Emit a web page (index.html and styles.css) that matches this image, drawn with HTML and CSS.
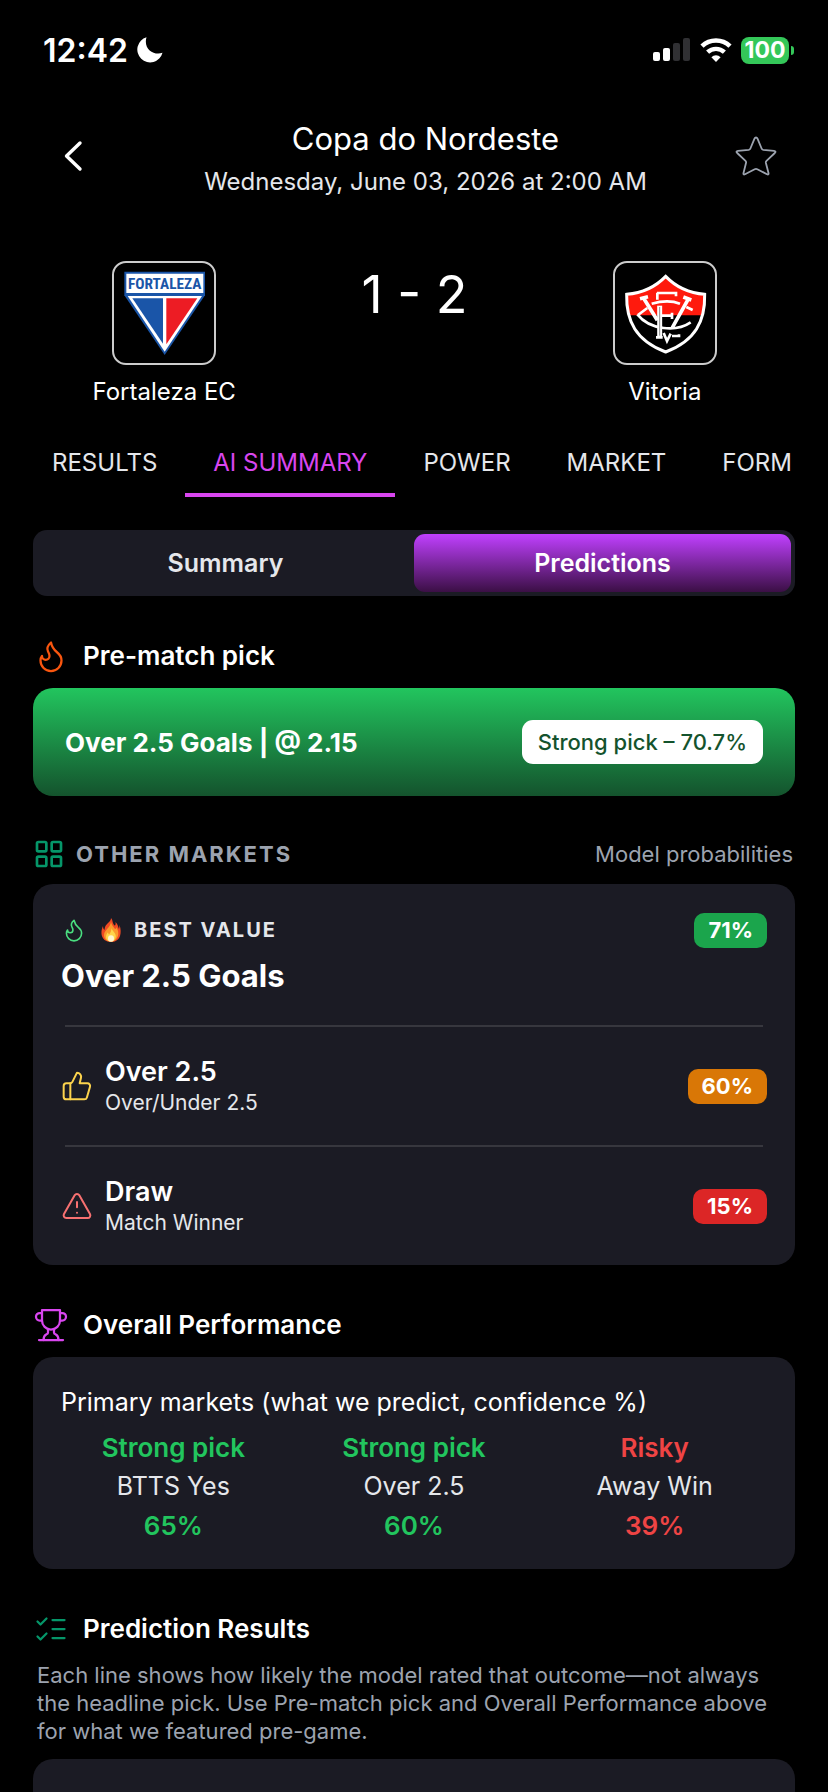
FILE: index.html
```
<!DOCTYPE html>
<html lang="en">
	<head>
		<meta charset="UTF-8">
		<meta name="viewport" content="width=device-width, initial-scale=1">
		<title>Fortaleza EC - Vitoria</title>
		<link rel="stylesheet" href="styles.css">
	</head>
	<body>
		<div class="status">
			<div class="status-left">
				<span class="clock">12:42</span>
				<svg class="moon" viewBox="0 0 26 26"><path d="M9.500 .3A12.800 12.800 0 1 0 25.500 15.800C17 19 6 12 9.500 .3Z" fill="#fff"/></svg>
			</div>
			<div class="status-right">
				<svg class="signal" viewBox="0 0 38 24">
					<rect x="0" y="14" width="7" height="9" rx="2" fill="#fff"/>
					<rect x="10" y="10" width="7" height="13" rx="2" fill="#fff"/>
					<rect x="20" y="5" width="7" height="18" rx="2" fill="#303033"/>
					<rect x="30" y="0" width="7" height="23" rx="2" fill="#303033"/>
				</svg>
				<svg class="wifi" viewBox="0 0 32 24">
					<path d="M2 8.200a20.200 20.200 0 0 1 28 0" fill="none" stroke="#fff" stroke-width="4.600"/>
					<path d="M7.600 14.200a12.200 12.200 0 0 1 16.800 0" fill="none" stroke="#fff" stroke-width="4.400"/>
					<path d="M16 24l-4.600-4.800a6.600 6.600 0 0 1 9.200 0Z" fill="#fff"/>
				</svg>
				<div class="battery">
					<span class="battery-level">100</span>
					<span class="battery-tip"></span>
				</div>
			</div>
		</div>

		<header class="header">
			<button class="icon-btn" type="button" aria-label="Back">
				<svg class="back" viewBox="0 0 36 36"><path d="M26 5L12.500 18L26 31" fill="none" stroke="#fff" stroke-width="3.400" stroke-linecap="round" stroke-linejoin="round"/></svg>
			</button>
			<div class="header-text">
				<h1 class="league">Copa do Nordeste</h1>
				<p class="date">Wednesday, June 03, 2026 at 2:00 AM</p>
			</div>
			<button class="icon-btn" type="button" aria-label="Favourite">
				<svg class="star" viewBox="0 0 42 42"><path d="M21 2.500Q22 2.500 22.500 3.700L26.600 13.500Q27 14.700 28.300 14.900L39 15.900Q41.500 16.200 39.800 18L31.500 25.800Q30.600 26.700 30.900 28L33.500 38Q33.900 40.200 32 39.200L22.300 34.200Q21 33.500 19.700 34.200L10 39.200Q8.100 40.200 8.500 38L11 28Q11.400 26.700 10.500 25.800L2.200 18Q.5 16.200 3 15.900L13.700 14.900Q15 14.700 15.400 13.500L19.500 3.700Q20 2.500 21 2.500Z" fill="none" stroke="#9ca3af" stroke-width="1.800" stroke-linejoin="round"/></svg>
			</button>
		</header>

		<div class="match">
			<div class="team">
				<div class="badge-box">
					<svg viewBox="162 68 300 300">
						<path d="M193 94H435V165L314 344L193 165Z" fill="#1a55a8"/>
						<path d="M199 100H430V158H199Z" fill="#fff"/>
						<path d="M203 167H426L314 334Z" fill="#fff"/>
						<path d="M217 174H309V310Z" fill="#1a55a8"/>
						<path d="M319 174H412L319 312Z" fill="#ed1c24"/>
						<text class="crest-text" x="314" y="146" text-anchor="middle">FORTALEZA</text>
					</svg>
				</div>
				<p class="team-name">Fortaleza EC</p>
			</div>
			<p class="score">1 - 2</p>
			<div class="team">
				<div class="badge-box">
					<svg viewBox="585 68 300 300">
						<path d="M737 108C708 138 668 158 620 162C618 242 648 302 737 335C826 302 856 242 854 162C806 158 766 138 737 108Z" fill="#000"/>
						<path d="M737 108C708 138 668 158 620 162C620 186 623 206 630 225H844C851 206 854 186 854 162C806 158 766 138 737 108Z" fill="#ff1a0d"/>
						<path d="M737 108C708 138 668 158 620 162C618 242 648 302 737 335C826 302 856 242 854 162C806 158 766 138 737 108Z" fill="none" stroke="#fff" stroke-width="9"/>
						<g fill="none" stroke="#fff" stroke-width="8">
							<path d="M695 190C730 180 760 182 780 190M652 222C690 270 770 275 812 246M654 224L682 203M799 200L818 209"/>
							<path d="M660 175L684 169M670 172L712 240M806 174L757 262M790 170L814 179" stroke-width="11"/>
							<path d="M711 158H768V168M712 157V178M708 291H728M725 226H757M756 217V236"/>
							<path d="M719 196V290" stroke-width="15"/>
							<path d="M731 278L741 302L752 280M756 287H777V282"/>
						</g>
						<path d="M719 200V286" fill="none" stroke="#555" stroke-width="2"/>
					</svg>
				</div>
				<p class="team-name">Vitoria</p>
			</div>
		</div>

		<nav class="tabs">
			<a class="tab" href="#results">RESULTS</a>
			<a class="tab active" href="#summary">AI SUMMARY</a>
			<a class="tab" href="#power">POWER</a>
			<a class="tab" href="#market">MARKET</a>
			<a class="tab" href="#form">FORM</a>
		</nav>

		<main class="content">
			<div class="switch">
				<button class="switch-btn" type="button">Summary</button>
				<button class="switch-btn on" type="button">Predictions</button>
			</div>

			<div class="section-head">
				<svg class="icon orange" viewBox="0 0 24 24"><path d="M8.500 14.500A2.500 2.500 0 0 0 11 12c0-1.380-.5-2-1-3-1.072-2.143-.224-4.054 2-6 .5 2.500 2 4.900 4 6.500 2 1.600 3 3.500 3 5.500a7 7 0 1 1-14 0c0-1.153.433-2.294 1-3a2.500 2.500 0 0 0 2.500 2.500z"/></svg>
				<h2>Pre-match pick</h2>
			</div>
			<div class="pick">
				<span class="pick-name">Over 2.5 Goals | @ 2.15</span>
				<span class="pick-tag">Strong pick – 70.7%</span>
			</div>

			<div class="section-head markets-head">
				<svg class="icon icon-m emerald bold" viewBox="0 0 24 24"><rect x="3" y="3" width="7" height="7" rx="1"/><rect x="14" y="3" width="7" height="7" rx="1"/><rect x="14" y="14" width="7" height="7" rx="1"/><rect x="3" y="14" width="7" height="7" rx="1"/></svg>
				<h2 class="caps">OTHER MARKETS</h2>
				<span class="note">Model probabilities</span>
			</div>
			<div class="card markets">
				<div class="best">
					<div class="best-row">
						<svg class="icon icon-s green" viewBox="0 0 24 24"><path d="M8.500 14.500A2.500 2.500 0 0 0 11 12c0-1.380-.5-2-1-3-1.072-2.143-.224-4.054 2-6 .5 2.500 2 4.900 4 6.500 2 1.600 3 3.500 3 5.500a7 7 0 1 1-14 0c0-1.153.433-2.294 1-3a2.500 2.500 0 0 0 2.500 2.500z"/></svg>
						<svg class="fire" viewBox="0 0 20 24">
							<path d="M10 0C12 2 11 4 13 7C14 8 15 7 14.500 4C17 6 17 9 18 11C18.500 9 18.500 8 18.500 7C20 11 20 15 19 18C17.500 22 14 24 10 24C5 24 1 21 .5 16C.2 13 1 10 2 8C2 10 2.500 11 3.500 12C4 8 5 7 7 5C9 3 10 2 10 0Z" fill="#f04a23"/>
							<path d="M10 4C11 8 13 9 14 11C15 11 15.500 10 15.500 9C18 14 17.500 17 16.500 19C15 22 12.500 23.500 10 23.500C6 23.500 3 21 3 17C3 14 5 12.500 6.500 10.500C8 9 9.500 7 10 4Z" fill="#fb9a2c"/>
							<path d="M10.500 10C11 13 15 15 14.800 18.500C14.500 21.500 12.500 23.500 10 23.500C7 23.500 5 21.500 5 19C5 17 6 16 6.500 14.500C7.500 15 7.500 16 8 16.500C9.500 15 10.500 12.500 10.500 10Z" fill="#ffd54a"/>
							<ellipse cx="10" cy="20.500" rx="3" ry="3.200" fill="#fff6cf"/>
						</svg>
						<span class="best-label">BEST VALUE</span>
						<span class="pct pct-green">71%</span>
					</div>
					<h3 class="best-name">Over 2.5 Goals</h3>
				</div>
				<hr class="line">
				<div class="market">
					<svg class="icon icon-m yellow" viewBox="0 0 24 24"><path d="M7 10v12"/><path d="M15 5.880 14 10h5.830a2 2 0 0 1 1.920 2.560l-2.330 8A2 2 0 0 1 17.500 22H4a2 2 0 0 1-2-2v-8a2 2 0 0 1 2-2h2.760a2 2 0 0 0 1.790-1.110L12 2a3.130 3.130 0 0 1 3 3.880Z"/></svg>
					<div class="market-text">
						<h3>Over 2.5</h3>
						<p>Over/Under 2.5</p>
					</div>
					<span class="pct pct-amber">60%</span>
				</div>
				<hr class="line">
				<div class="market">
					<svg class="icon icon-m coral" viewBox="0 0 24 24"><path d="m21.730 18-8-14a2 2 0 0 0-3.480 0l-8 14A2 2 0 0 0 4 21h16a2 2 0 0 0 1.730-3Z"/><path d="M12 9v4"/><path d="M12 17h.01"/></svg>
					<div class="market-text">
						<h3>Draw</h3>
						<p>Match Winner</p>
					</div>
					<span class="pct pct-red">15%</span>
				</div>
			</div>

			<div class="section-head">
				<svg class="icon purple" viewBox="0 0 24 24"><path d="M6 9H4.500a2.500 2.500 0 0 1 0-5H6"/><path d="M18 9h1.500a2.500 2.500 0 0 0 0-5H18"/><path d="M4 22h16"/><path d="M10 14.660V17c0 .55-.47.98-.97 1.210C7.850 18.750 7 20.240 7 22"/><path d="M14 14.660V17c0 .55.47.98.97 1.210C16.150 18.750 17 20.240 17 22"/><path d="M18 2H6v7a6 6 0 0 0 12 0V2Z"/></svg>
				<h2>Overall Performance</h2>
			</div>
			<div class="card performance">
				<p class="perf-title">Primary markets (what we predict, confidence %)</p>
				<div class="perf-grid">
					<div class="perf good">
						<b>Strong pick</b>
						<span>BTTS Yes</span>
						<b>65%</b>
					</div>
					<div class="perf good">
						<b>Strong pick</b>
						<span>Over 2.5</span>
						<b>60%</b>
					</div>
					<div class="perf bad">
						<b>Risky</b>
						<span>Away Win</span>
						<b>39%</b>
					</div>
				</div>
			</div>

			<div class="section-head">
				<svg class="icon emerald" viewBox="0 0 24 24"><path d="m3 17 2 2 4-4"/><path d="m3 7 2 2 4-4"/><path d="M13 6h8"/><path d="M13 12h8"/><path d="M13 18h8"/></svg>
				<h2>Prediction Results</h2>
			</div>
			<p class="desc">Each line shows how likely the model rated that outcome—not always the headline pick. Use Pre-match pick and Overall Performance above for what we featured pre-game.</p>
			<div class="card results"></div>
		</main>
	</body>
</html>
```
FILE: styles.css
```
*{
	box-sizing:border-box;
}
h1,h2,h3,p{
	margin:0;
	font-weight:400;
}
button{
	margin:0;
	padding:0;
	border:none;
	background:none;
	font-family:inherit;
	color:inherit;
}
a{
	color:inherit;
	text-decoration:none;
}
svg{
	display:block;
	flex:none;
}
body{
	margin:0;
	min-height:100vh;
	display:flex;
	flex-direction:column;
	background:#000;
	color:#fff;
	font-family:Inter, "Liberation Sans", sans-serif;
	font-size:24px;
}

/* status bar */
.status{
	height:100px;
	padding:0 34px 0 43px;
	display:flex;
	align-items:center;
	justify-content:space-between;
}
.status-left,
.status-right{
	display:flex;
	align-items:center;
	gap:9px;
}
.clock{
	font-size:32px;
	font-weight:600;
}
.moon{
	width:26px;
	height:26px;
}
.signal{
	width:38px;
	height:24px;
}
.wifi{
	width:32px;
	height:24px;
}
.battery{
	display:flex;
	align-items:center;
	gap:2px;
}
.battery-level{
	width:48px;
	height:27px;
	border-radius:8px;
	background:#34c759;
	font-size:23px;
	font-weight:700;
	line-height:27px;
	text-align:center;
}
.battery-tip{
	width:3px;
	height:9px;
	border-radius:0 4px 4px 0;
	background:#34c759;
}

/* header */
.header{
	margin-top:19px;
	padding:0 51px 0 54px;
	display:flex;
	align-items:flex-start;
	justify-content:space-between;
}
.icon-btn{
	height:74px;
	display:flex;
	align-items:center;
	cursor:pointer;
}
.back{
	width:36px;
	height:36px;
}
.star{
	width:42px;
	height:42px;
}
.header-text{
	text-align:center;
	padding-left:26px;
}
.league{
	font-size:31px;
	line-height:40px;
}
.date{
	margin-top:7px;
	line-height:32px;
	color:#e5e7eb;
}

/* teams and score */
.match{
	margin-top:63px;
	padding:0 38px 0 39px;
	display:grid;
	grid-template-columns:repeat(3, 1fr);
}
.team{
	display:flex;
	flex-direction:column;
	align-items:center;
}
.badge-box{
	width:104px;
	height:104px;
	border:2px solid #ccc;
	border-radius:14px;
}
.crest-text{
	font-family:"Roboto Condensed", "Liberation Sans Narrow", "Liberation Sans", sans-serif;
	font-size:46px;
	font-weight:700;
	fill:#1a55a8;
}
.team-name{
	margin-top:11px;
	line-height:32px;
}
.score{
	font-size:52px;
	line-height:68px;
	text-align:center;
}

/* tabs */
.tabs{
	margin-top:31px;
	padding:0 24px;
	display:flex;
	overflow:hidden;
}
.tab{
	flex:none;
	padding:8px 28px 14px;
	border-bottom:4px solid transparent;
	line-height:32px;
	color:#e5e7eb;
}
.tab.active{
	color:#d946ef;
	border-color:#d946ef;
}

.content{
	flex:1;
	padding:33px 33px 0;
	display:flex;
	flex-direction:column;
}
.switch{
	padding:4px;
	height:66px;
	display:flex;
	border-radius:14px;
	background:#1b1b24;
}
.switch-btn{
	flex:1;
	border-radius:11px;
	font-size:25px;
	font-weight:600;
	color:#e5e7eb;
	cursor:pointer;
}
.switch-btn.on{
	color:#fff;
	background:linear-gradient(#c040ff, #3b0f45);
}

.section-head{
	margin:42px 0 14px;
	display:flex;
	align-items:center;
	gap:14px;
}
.section-head h2{
	font-size:26px;
	font-weight:600;
	line-height:36px;
}
.icon{
	width:36px;
	height:36px;
	fill:none;
	stroke:currentColor;
	stroke-width:1.5;
	stroke-linecap:round;
	stroke-linejoin:round;
}
.icon-m{
	width:32px;
	height:32px;
}
.icon-s{
	width:26px;
	height:26px;
}
.bold{
	stroke-width:2;
}
.orange{
	color:#f9560f;
}
.emerald{
	color:#059669;
}
.green{
	color:#4ade80;
}
.yellow{
	color:#fcd34d;
}
.coral{
	color:#f87171;
}
.purple{
	color:#d946ef;
}

.pick{
	padding:32px;
	display:flex;
	align-items:center;
	justify-content:space-between;
	border-radius:20px;
	background:linear-gradient(#22c55e, #14532d);
}
.pick-name{
	font-size:26px;
	font-weight:700;
}
.pick-tag{
	padding:0 16px;
	border-radius:11px;
	background:#fff;
	color:#14532d;
	font-size:22px;
	font-weight:500;
	line-height:44px;
}

.section-head.markets-head{
	gap:11px;
}
.section-head .caps{
	flex:1;
	font-size:22px;
	font-weight:700;
	line-height:32px;
	letter-spacing:2px;
	color:#9ca3af;
}
.note{
	padding-right:2px;
	font-size:22px;
	line-height:32px;
	color:#9ca3af;
}

.card{
	border-radius:20px;
	background:#1b1b24;
}
.markets{
	padding:0 28px;
}
.best{
	padding:28px 0 29px;
}
.best-row{
	display:flex;
	align-items:center;
	height:36px;
}
.fire{
	width:20px;
	height:24px;
	margin-left:14px;
}
.best-label{
	flex:1;
	margin-left:13px;
	font-size:20px;
	font-weight:700;
	letter-spacing:2px;
	color:#e5e7eb;
}
.best-name{
	margin-top:8px;
	font-size:31px;
	font-weight:700;
	line-height:40px;
}
.pct{
	padding:0 14px;
	border-radius:10px;
	font-size:22px;
	font-weight:700;
	line-height:35px;
}
.pct-green{
	background:#1ba54c;
}
.pct-amber{
	background:#d97706;
}
.pct-red{
	background:#dc2626;
}
.line{
	height:2px;
	margin:0 4px;
	border:none;
	background:#37373e;
}
.market{
	padding:28px 0;
	display:flex;
	align-items:center;
	gap:12px;
}
.market-text{
	flex:1;
}
.market h3{
	font-size:27px;
	font-weight:600;
	line-height:34px;
}
.market p{
	font-size:21px;
	line-height:28px;
	color:#e5e7eb;
}

.performance{
	padding:28px 20px 24px;
}
.perf-title{
	padding:0 8px;
	font-size:25px;
	line-height:34px;
}
.perf-grid{
	margin-top:9px;
	display:grid;
	grid-template-columns:repeat(3, 1fr);
}
.perf{
	display:flex;
	flex-direction:column;
	align-items:center;
	font-size:25px;
	line-height:39px;
}
.perf b{
	font-size:26px;
	font-weight:600;
}
.perf span{
	color:#e5e7eb;
}
.good b{
	color:#22c55e;
}
.bad b{
	color:#ef4444;
}

.desc{
	padding:0 4px;
	font-size:22px;
	line-height:28px;
	color:#9ca3af;
}
.results{
	flex:1;
	min-height:33px;
	margin-top:14px;
	border-radius:20px 20px 0 0;
}
```
